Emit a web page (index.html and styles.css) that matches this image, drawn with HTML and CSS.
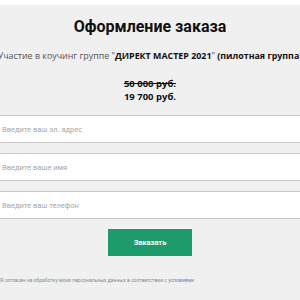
FILE: index.html
```html
<!DOCTYPE html>
<html lang="ru">
<head>
<meta charset="utf-8">
<link rel="stylesheet" href="styles.css">
</head>
<body>
<div class="page">
  <h1 class="title">Оформление заказа</h1>
  <p class="product">Участие в коучинг группе "<b>ДИРЕКТ МАСТЕР 2021</b>" <b>(пилотная группа)</b></p>
  <div class="prices">
    <div class="old">50 000 руб.</div>
    <div class="new">19 700 руб.</div>
  </div>
  <form class="form">
    <input class="field" type="text" placeholder="Введите ваш эл. адрес">
    <input class="field" type="text" placeholder="Введите ваше имя">
    <input class="field" type="text" placeholder="Введите ваш телефон">
    <div class="actions"><button class="btn" type="button">Заказать</button></div>
    <p class="consent">Я согласен на обработку моих персональных данных в соответствии с <a href="#">условиями</a></p>
  </form>
</div>
</body>
</html>
```
FILE: styles.css
```css
html, body { margin: 0; padding: 0; background: #fff; }
body { padding-top: 5px; overflow: hidden; }
.page {
  background: #f0f0f0;
  height: 295px;
  font-family: "Open Sans", sans-serif;
  display: flex;
  flex-direction: column;
  align-items: center;
}
.title {
  font-family: Roboto, sans-serif;
  font-weight: 700;
  font-size: 16px;
  line-height: 20px;
  color: #111;
  margin: 12px 0 0;
}
.product {
  margin: 12px 0 0;
  font-size: 8.9px;
  line-height: 14px;
  color: #555;
  white-space: nowrap;
  text-align: center;
}
.product b { color: #111; font-weight: 700; }
.prices {
  margin-top: 14px;
  text-align: center;
  font-size: 9.5px;
  font-weight: 700;
  line-height: 13px;
  color: #111;
}
.old { text-decoration: line-through; }
.form {
  width: 100%;
  margin-top: 12px;
  display: flex;
  flex-direction: column;
  gap: 10px;
}
.field {
  display: block;
  box-sizing: border-box;
  width: 100%;
  height: 28px;
  margin: 0;
  border: 0;
  border-top: 1px solid #c8c8c8;
  border-bottom: 1px solid #c8c8c8;
  background: #fff;
  padding: 0 2px;
  font-family: Roboto, sans-serif;
  font-size: 7.5px;
  outline: none;
}
.field::placeholder { color: #a8a8a8; }
.actions { display: flex; justify-content: center; }
.btn {
  width: 84px;
  height: 27px;
  border: 0;
  background: #1d9b6b;
  color: #fff;
  font-family: Roboto, sans-serif;
  font-weight: 700;
  font-size: 7.5px;
}
.consent {
  margin: 11px 0 0;
  font-size: 5px;
  color: #888;
  font-family: Roboto, sans-serif;
}
.consent a { color: #5b82b5; text-decoration: none; }
```
